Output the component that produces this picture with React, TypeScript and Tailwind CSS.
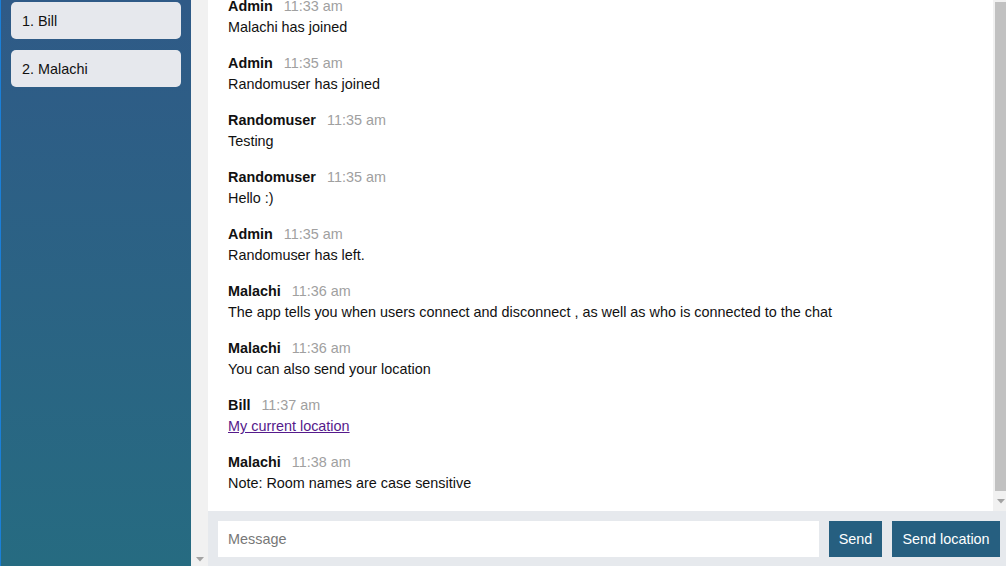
const users = ["Bill", "Malachi"];

const messages = [
  { from: "Admin", at: "11:33 am", text: "Malachi has joined" },
  { from: "Admin", at: "11:35 am", text: "Randomuser has joined" },
  { from: "Randomuser", at: "11:35 am", text: "Testing" },
  { from: "Randomuser", at: "11:35 am", text: "Hello :)" },
  { from: "Admin", at: "11:35 am", text: "Randomuser has left." },
  {
    from: "Malachi",
    at: "11:36 am",
    text: "The app tells you when users connect and disconnect , as well as who is connected to the chat",
  },
  { from: "Malachi", at: "11:36 am", text: "You can also send your location" },
  { from: "Bill", at: "11:37 am", text: "My current location", link: true },
  { from: "Malachi", at: "11:38 am", text: "Note: Room names are case sensitive" },
];

const Arrow = () => (
  <svg width="8" height="5" viewBox="0 0 8 5">
    <path d="M0 0 H8 L4 4.5 Z" fill="#a3a3a3" />
  </svg>
);

const App = () => {
  return (
    <div className="flex h-[566px] w-[1006px] overflow-hidden bg-white font-['Liberation_Sans',Arial,sans-serif] text-[14.4px] text-[#111]">
      {/* sidebar */}
      <aside className="w-[191px] border-l border-[#1a7fd8] bg-gradient-to-b from-[#2f5a87] to-[#266b81] px-[10px] pt-[2px]">
        <ol className="flex flex-col gap-[11px]">
          {users.map((u, i) => (
            <li
              key={u}
              className="flex h-[37px] items-center rounded-[5px] bg-[#e6e8ed] px-[11px] pt-[1px] leading-none"
            >
              {i + 1}. {u}
            </li>
          ))}
        </ol>
      </aside>
      <div className="flex w-[17px] flex-col items-center justify-end bg-[#f1f1f1] pb-[4px]">
        <Arrow />
      </div>

      {/* chat */}
      <main className="flex flex-1 flex-col">
        <div className="flex min-h-0 flex-1">
          <div className="flex flex-1 flex-col justify-end overflow-hidden px-[20px] pb-[19px]">
            {messages.map((m, i) => (
              <div key={i} className={i ? "mt-[19px]" : ""}>
                <div className="flex h-[17px] items-center gap-[11px] leading-none">
                  <span className="font-bold">{m.from}</span>
                  <span className="text-[#a0a0a0]">{m.at}</span>
                </div>
                <div className="mt-[4px] flex h-[17px] items-center leading-none">
                  {m.link ? (
                    <a href="#" className="text-[#551a8b] underline">
                      {m.text}
                    </a>
                  ) : (
                    m.text
                  )}
                </div>
              </div>
            ))}
          </div>
          <div className="flex w-[13px] flex-col bg-[#f1f1f1] pl-[2px] pt-[2px]">
            <div className="flex-1 bg-[#c1c1c1]" />
            <div className="flex h-[20px] items-center justify-center">
              <Arrow />
            </div>
          </div>
        </div>

        <div className="flex h-[55px] shrink-0 items-start gap-[10px] bg-[#e6e9ed] pt-[10px] pl-[10px] pr-[6px]">
          <input
            placeholder="Message"
            className="h-[36px] min-w-0 flex-1 bg-white px-[10px] text-[14.4px] text-[#111] outline-none placeholder:text-[#777]"
          />
          <button className="h-[36px] w-[53px] bg-[#265f80] pt-[2px] text-white">Send</button>
          <button className="h-[36px] w-[108px] bg-[#265f80] pt-[2px] text-white">Send location</button>
        </div>
      </main>
    </div>
  );
};

export default App;
